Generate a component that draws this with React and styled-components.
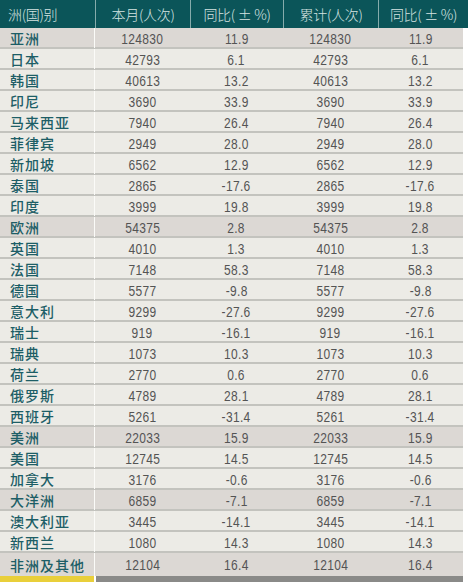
import React from 'react';
import styled, { createGlobalStyle } from 'styled-components';

const GlobalStyle = createGlobalStyle`
  html, body {
    margin: 0;
    padding: 0;
    background: #ffffff;
  }
`;

const rows = [
  ['亚洲', '124830', '11.9', '124830', '11.9', true],
  ['日本', '42793', '6.1', '42793', '6.1'],
  ['韩国', '40613', '13.2', '40613', '13.2'],
  ['印尼', '3690', '33.9', '3690', '33.9'],
  ['马来西亚', '7940', '26.4', '7940', '26.4'],
  ['菲律宾', '2949', '28.0', '2949', '28.0'],
  ['新加坡', '6562', '12.9', '6562', '12.9'],
  ['泰国', '2865', '-17.6', '2865', '-17.6'],
  ['印度', '3999', '19.8', '3999', '19.8'],
  ['欧洲', '54375', '2.8', '54375', '2.8', true],
  ['英国', '4010', '1.3', '4010', '1.3'],
  ['法国', '7148', '58.3', '7148', '58.3'],
  ['德国', '5577', '-9.8', '5577', '-9.8'],
  ['意大利', '9299', '-27.6', '9299', '-27.6'],
  ['瑞士', '919', '-16.1', '919', '-16.1'],
  ['瑞典', '1073', '10.3', '1073', '10.3'],
  ['荷兰', '2770', '0.6', '2770', '0.6'],
  ['俄罗斯', '4789', '28.1', '4789', '28.1'],
  ['西班牙', '5261', '-31.4', '5261', '-31.4'],
  ['美洲', '22033', '15.9', '22033', '15.9', true],
  ['美国', '12745', '14.5', '12745', '14.5'],
  ['加拿大', '3176', '-0.6', '3176', '-0.6'],
  ['大洋洲', '6859', '-7.1', '6859', '-7.1', true],
  ['澳大利亚', '3445', '-14.1', '3445', '-14.1'],
  ['新西兰', '1080', '14.3', '1080', '14.3'],
  ['非洲及其他', '12104', '16.4', '12104', '16.4', true],
];

const headers = ['洲(国)别', '本月(人次)', '同比( ± %)', '累计(人次)', '同比( ± %)'];

const Wrap = styled.div`
  width: 468px;
  height: 582px;
  overflow: hidden;
  background: #ffffff;
  display: flex;
  flex-direction: column;
`;

const HeaderRow = styled.div`
  display: grid;
  grid-template-columns: 95px 95px 93px 95px 90px;
  height: 28px;
  flex: none;
  background: #0b5559;
`;

const HeaderCell = styled.div`
  display: flex;
  align-items: center;
  justify-content: ${p => (p.$first ? 'flex-start' : 'center')};
  padding-left: ${p => (p.$first ? '8px' : '0')};
  border-left: ${p => (p.$first ? 'none' : '1px solid #86abab')};
  color: #d6e4e2;
  font-family: "Noto Sans CJK SC", sans-serif;
  font-size: 14px;
  font-weight: 300;
  letter-spacing: -0.3px;
  white-space: pre;
`;

const Body = styled.div`
  width: 463px;
  display: flex;
  flex-direction: column;
`;

const Row = styled.div`
  display: grid;
  grid-template-columns: 95px 95px 93px 95px 85px;
  height: ${p => (p.$last ? '23px' : '21px')};
  flex: none;
  box-sizing: border-box;
  background: ${p => (p.$region ? '#dcd8d4' : '#ecebe6')};
  border-bottom: ${p => (p.$last ? 'none' : '2px solid #c3c3be')};
`;

const NameCell = styled.div`
  display: flex;
  align-items: center;
  padding-left: 10px;
  border-right: 1px solid #fbfbf8;
  color: #1d5e66;
  font-family: "Noto Sans CJK SC", sans-serif;
  font-size: 14px;
  font-weight: 500;
  letter-spacing: 1px;
`;

const NumCell = styled.div`
  display: flex;
  align-items: center;
  justify-content: center;
`;

const Num = styled.span`
  display: inline-block;
  transform: scaleX(0.8);
  color: #545454;
  font-family: "Liberation Sans", sans-serif;
  font-size: 15px;
  letter-spacing: 0.4px;
`;

const Footer = styled.div`
  display: grid;
  grid-template-columns: 94px 2px 367px;
  height: 6px;
  flex: none;
`;

const FooterBar = styled.div`
  background: ${p => p.$color};
`;

export default function App() {
  return (
    <Wrap>
      <GlobalStyle />
      <HeaderRow>
        {headers.map((h, i) => (
          <HeaderCell key={i} $first={i === 0}>{h}</HeaderCell>
        ))}
      </HeaderRow>
      <Body>
        {rows.map((r, i) => (
          <Row key={r[0]} $region={r[5]} $last={i === rows.length - 1}>
            <NameCell>{r[0]}</NameCell>
            {r.slice(1, 5).map((v, j) => (
              <NumCell key={j}><Num>{v}</Num></NumCell>
            ))}
          </Row>
        ))}
        <Footer>
          <FooterBar $color="#e9cf3a" />
          <FooterBar $color="#ffffff" />
          <FooterBar $color="#8a8a88" />
        </Footer>
      </Body>
    </Wrap>
  );
}
